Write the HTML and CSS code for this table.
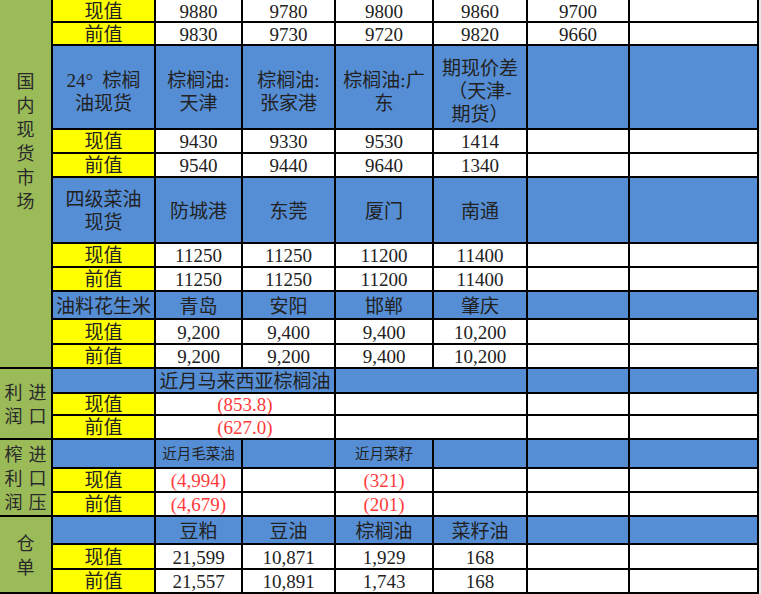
FILE: index.html
```html
<!DOCTYPE html>
<html lang="zh-CN">
<head>
<meta charset="utf-8">
<title>油脂现货与利润</title>
<link rel="stylesheet" href="styles.css">
</head>
<body>
<div class="sheet">
  <div class="c g grp-spot"><span class="vt one">国内现货市场</span></div>
  <div class="c y">现值</div><div class="c w">9880</div><div class="c w">9780</div><div class="c w">9800</div><div class="c w">9860</div><div class="c w">9700</div><div class="c w"></div>
  <div class="c y">前值</div><div class="c w">9830</div><div class="c w">9730</div><div class="c w">9720</div><div class="c w">9820</div><div class="c w">9660</div><div class="c w"></div>

  <div class="c b hdr">24°&nbsp; 棕榈<br>油现货</div><div class="c b hdr">棕榈油:<br>天津</div><div class="c b hdr">棕榈油:<br>张家港</div><div class="c b hdr">棕榈油:广<br>东</div><div class="c b hdr">期现价差<br>（天津-<br>期货）</div><div class="c b"></div><div class="c b"></div>
  <div class="c y">现值</div><div class="c w">9430</div><div class="c w">9330</div><div class="c w">9530</div><div class="c w">1414</div><div class="c w"></div><div class="c w"></div>
  <div class="c y">前值</div><div class="c w">9540</div><div class="c w">9440</div><div class="c w">9640</div><div class="c w">1340</div><div class="c w"></div><div class="c w"></div>

  <div class="c b">四级菜油<br>现货</div><div class="c b">防城港</div><div class="c b">东莞</div><div class="c b">厦门</div><div class="c b">南通</div><div class="c b"></div><div class="c b"></div>
  <div class="c y">现值</div><div class="c w">11250</div><div class="c w">11250</div><div class="c w">11200</div><div class="c w">11400</div><div class="c w"></div><div class="c w"></div>
  <div class="c y">前值</div><div class="c w">11250</div><div class="c w">11250</div><div class="c w">11200</div><div class="c w">11400</div><div class="c w"></div><div class="c w"></div>

  <div class="c b">油料花生米</div><div class="c b">青岛</div><div class="c b">安阳</div><div class="c b">邯郸</div><div class="c b">肇庆</div><div class="c b"></div><div class="c b"></div>
  <div class="c y">现值</div><div class="c w">9,200</div><div class="c w">9,400</div><div class="c w">9,400</div><div class="c w">10,200</div><div class="c w"></div><div class="c w"></div>
  <div class="c y">前值</div><div class="c w">9,200</div><div class="c w">9,200</div><div class="c w">9,400</div><div class="c w">10,200</div><div class="c w"></div><div class="c w"></div>

  <div class="c g grp3"><span class="vt two">进口利润</span></div>
  <div class="c b"></div><div class="c b span2">近月马来西亚棕榈油</div><div class="c b span2"></div><div class="c b"></div><div class="c b"></div>
  <div class="c y short">现值</div><div class="c w span2 red short">(853.8)</div><div class="c w span2"></div><div class="c w"></div><div class="c w"></div>
  <div class="c y">前值</div><div class="c w span2 red">(627.0)</div><div class="c w span2"></div><div class="c w"></div><div class="c w"></div>

  <div class="c g grp3"><span class="vt three">进口压榨利润</span></div>
  <div class="c b"></div><div class="c b small">近月毛菜油</div><div class="c b"></div><div class="c b small">近月菜籽</div><div class="c b"></div><div class="c b"></div><div class="c b"></div>
  <div class="c y">现值</div><div class="c w red">(4,994)</div><div class="c w"></div><div class="c w red">(321)</div><div class="c w"></div><div class="c w"></div><div class="c w"></div>
  <div class="c y">前值</div><div class="c w red">(4,679)</div><div class="c w"></div><div class="c w red">(201)</div><div class="c w"></div><div class="c w"></div><div class="c w"></div>

  <div class="c g grp3"><span class="vt one">仓单</span></div>
  <div class="c b"></div><div class="c b">豆粕</div><div class="c b">豆油</div><div class="c b">棕榈油</div><div class="c b">菜籽油</div><div class="c b"></div><div class="c b"></div>
  <div class="c y">现值</div><div class="c w">21,599</div><div class="c w">10,871</div><div class="c w">1,929</div><div class="c w">168</div><div class="c w"></div><div class="c w"></div>
  <div class="c y">前值</div><div class="c w">21,557</div><div class="c w">10,891</div><div class="c w">1,743</div><div class="c w">168</div><div class="c w"></div><div class="c w"></div>
</div>
</body>
</html>
```
FILE: styles.css
```css
html, body {
  margin: 0;
  padding: 0;
  background: #e6e6e6;
  overflow: hidden;
}

.sheet {
  display: grid;
  width: 759px;
  box-sizing: border-box;
  grid-template-columns: 51px 101px 85px 91px 96px 92px 100px 127px;
  grid-template-rows: 21px 21px 82px 22px 22px 64px 22px 22px 26px 23px 22px 23px 20px 22px 27px 22px 22px 26px 23px 22px;
  gap: 2px;
  padding: 0 2px 2px 0;
  background: #000;
  font-family: "Liberation Serif", "Noto Sans CJK SC", serif;
  font-size: 19px;
  color: #222;
}

.c {
  display: flex;
  align-items: center;
  justify-content: center;
  text-align: center;
  line-height: 20px;
  white-space: nowrap;
  box-sizing: border-box;
  padding-top: 2px;
}

.short {
  padding-top: 1px;
}

.hdr {
  line-height: 23.5px;
  padding-top: 9px;
}

.b { line-height: 23px; }
.g { background: #9bbb59; padding-top: 0; }
.y { background: #ffff00; }
.b { background: #558ed5; }
.w { background: #ffffff; }

.span2 { grid-column: span 2; }
.red { color: #ff3b3b; }
.small { font-size: 14.5px; }

.grp-spot {
  grid-column: 1;
  grid-row: 1 / span 11;
  padding-bottom: 85px;
}
.grp3 {
  grid-column: 1;
  grid-row: span 3;
}

.vt {
  display: inline-block;
  writing-mode: vertical-rl;
  font-family: "Noto Sans CJK SC", sans-serif;
  font-size: 18px;
  line-height: 24px;
  letter-spacing: 6px;
  white-space: normal;
  padding-top: 6px;
  color: #2a2a2a;
}
.vt.two { height: 48px; }
.vt.three { height: 72px; }
```
